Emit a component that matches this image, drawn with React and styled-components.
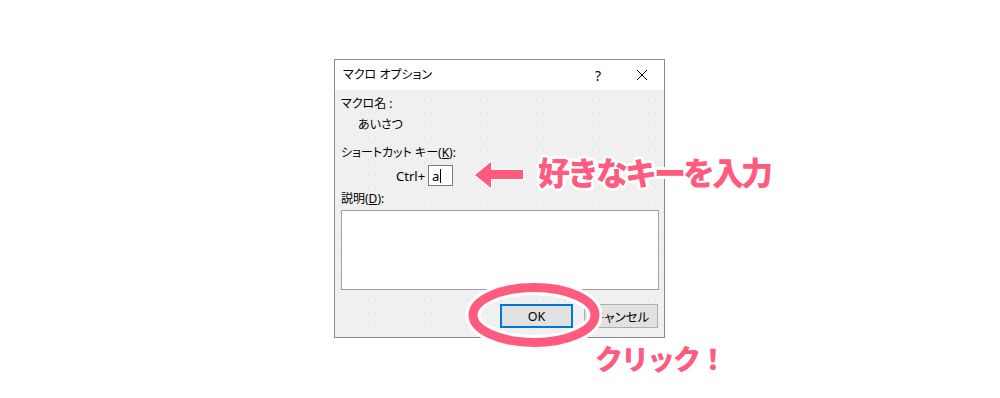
import styled, { createGlobalStyle } from 'styled-components';

const Global = createGlobalStyle`
  html, body {
    margin: 0;
    padding: 0;
    background: #fff;
  }
  body {
    font-family: "Noto Sans", "Noto Sans CJK JP", sans-serif;
  }
`;

const pink = '#ff5b7f';

const Page = styled.div`
  position: relative;
  width: 1000px;
  height: 398px;
  padding: 59px 0 0 334px;
  box-sizing: border-box;
  overflow: hidden;
  background: #fff;
`;

const Dialog = styled.div`
  width: 331px;
  height: 279px;
  box-sizing: border-box;
  border: 1px solid #8a8a8a;
  display: flex;
  flex-direction: column;
  font-size: 12px;
  font-feature-settings: "palt";
  color: #000;
`;

const TitleBar = styled.div`
  height: 30px;
  background: #fff;
  display: flex;
  align-items: center;
  padding-left: 8px;
`;

const TitleText = styled.div`
  flex: 1;
  line-height: 16px;
`;

const Help = styled.div`
  width: 44px;
  text-align: center;
  font-size: 14px;
  padding-left: 4px;
`;

const Close = styled.div`
  width: 44px;
  height: 30px;
  display: flex;
  align-items: center;
  justify-content: center;
`;

const Body = styled.div`
  flex: 1;
  background-color: #f0f0f0;
  background-image: radial-gradient(circle, #d9d9d9 0.7px, transparent 1px);
  background-size: 7px 12.5px;
  background-position: 2px 4px;
  padding: 6px 5px 0 6px;
  display: flex;
  flex-direction: column;
`;

const Label = styled.div`
  line-height: 16px;
  margin-top: ${(p) => p.$top || 0}px;
  padding-left: ${(p) => p.$indent || 0}px;
  white-space: nowrap;
`;

const KeyRow = styled.div`
  display: flex;
  align-items: center;
  height: 21px;
  margin-top: 4px;
  padding-left: 55px;
  gap: 3px;
  font-size: 13px;
`;

const KeyInput = styled.div`
  width: 20px;
  height: 19px;
  border: 1px solid #7a7a7a;
  background: #fff;
  display: flex;
  align-items: center;
  padding-left: 3px;
  box-sizing: content-box;
  font-size: 13px;
`;

const Caret = styled.span`
  display: inline-block;
  width: 1px;
  height: 14px;
  background: #000;
  margin-left: 1px;
`;

const TextArea = styled.div`
  width: 318px;
  height: 80px;
  box-sizing: border-box;
  border: 1px solid #a0a0a0;
  background: #fff;
  margin-top: 3px;
`;

const Buttons = styled.div`
  display: flex;
  justify-content: flex-end;
  gap: 11px;
  margin-top: 14px;
  padding-right: 1px;
`;

const Button = styled.div`
  width: ${(p) => p.$w}px;
  height: 24px;
  box-sizing: border-box;
  border: ${(p) => (p.$default ? '2px solid #0078d7' : '1px solid #adadad')};
  background: #e1e1e1;
  display: flex;
  align-items: center;
  justify-content: center;
  font-size: 12.5px;
`;

const Arrow = styled.svg`
  position: absolute;
  left: 472px;
  top: 159px;
`;

const Callout = styled.div`
  position: absolute;
  left: ${(p) => p.$x}px;
  top: ${(p) => p.$y}px;
  font-family: "Noto Sans CJK JP", sans-serif;
  font-weight: 900;
  font-size: ${(p) => p.$size}px;
  line-height: 1;
  color: ${pink};
  white-space: nowrap;
  letter-spacing: ${(p) => p.$ls || 0}px;
  text-shadow:
    3px 0 0 #fff, -3px 0 0 #fff, 0 3px 0 #fff, 0 -3px 0 #fff,
    2px 2px 0 #fff, -2px 2px 0 #fff, 2px -2px 0 #fff, -2px -2px 0 #fff;
`;

const Ring = styled.svg`
  position: absolute;
  left: 464px;
  top: 279px;
`;

export default function App() {
  return (
    <>
      <Global />
      <Page>
        <Dialog>
          <TitleBar>
            <TitleText>マクロ オプション</TitleText>
            <Help>?</Help>
            <Close>
              <svg width="12" height="12" viewBox="0 0 12 12">
                <path d="M1 1L11 11M11 1L1 11" stroke="#000" strokeWidth="1" fill="none" />
              </svg>
            </Close>
          </TitleBar>
          <Body>
            <Label>マクロ名 :</Label>
            <Label $top={5} $indent={17}>あいさつ</Label>
            <Label $top={12}>
              ショートカット キー(<u>K</u>):
            </Label>
            <KeyRow>
              <span>Ctrl+</span>
              <KeyInput>
                a<Caret />
              </KeyInput>
            </KeyRow>
            <Label $top={5}>
              説明(<u>D</u>):
            </Label>
            <TextArea />
            <Buttons>
              <Button $w={73} $default>OK</Button>
              <Button $w={74}>キャンセル</Button>
            </Buttons>
          </Body>
        </Dialog>

        <Arrow width="56" height="32" viewBox="0 0 56 32">
          <path
            d="M3 16 L19 3 L19 11 L51 11 L51 20 L19 20 L19 29 Z"
            fill={pink}
            stroke="#fff"
            strokeWidth="2.5"
            strokeLinejoin="round"
            paintOrder="stroke"
          />
        </Arrow>
        <Callout $x={538} $y={155} $size={32} $ls={-3}>
          好きなキーを入力
        </Callout>

        <Ring width="140" height="72" viewBox="0 0 140 72">
          <ellipse cx="70" cy="36" rx="61" ry="27.5" fill="none" stroke="#fff" strokeWidth="15" />
          <ellipse cx="70" cy="36" rx="61" ry="27.5" fill="none" stroke={pink} strokeWidth="9" />
        </Ring>
        <Callout $x={595} $y={344} $size={28} $ls={-2}>
          クリック！
        </Callout>
      </Page>
    </>
  );
}
